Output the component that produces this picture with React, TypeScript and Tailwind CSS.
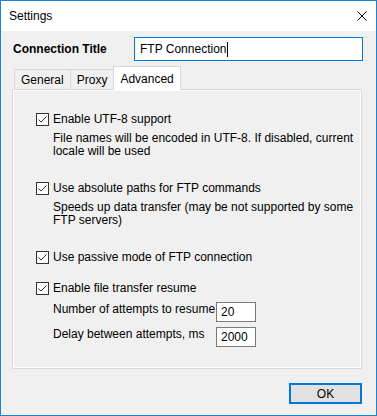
import React from 'react';

const FONT = { fontFamily: '"Liberation Sans", Arial, sans-serif' };

function Check() {
  return (
    <span className="w-[13px] h-[13px] border border-[#333333] bg-white flex items-center justify-center shrink-0">
      <svg width="11" height="11" viewBox="0 0 11 11">
        <polyline points="1.5,5.5 4,8 9.5,2.5" fill="none" stroke="#333333" strokeWidth="1" />
      </svg>
    </span>
  );
}

function CheckRow({ label, className = '' }: { label: string; className?: string }) {
  return (
    <div className={`flex items-center gap-[4px] h-[14px] ${className}`}>
      <Check />
      <span>{label}</span>
    </div>
  );
}

function Tab({ label, active }: { label: string; active?: boolean }) {
  if (active) {
    return (
      <div className="relative z-10 -mb-px h-[24px] px-[6px] bg-white border border-b-0 border-[#d9d9d9] flex items-center -ml-px">
        {label}
      </div>
    );
  }
  return (
    <div className="h-[20px] px-[6px] bg-[#f0f0f0] border border-b-0 border-[#d9d9d9] flex items-center -ml-px first:ml-0">
      {label}
    </div>
  );
}

function NumBox({ value }: { value: string }) {
  return (
    <div className="w-[40px] h-[20px] border border-[#7a7a7a] bg-white flex items-center pl-[4px]">{value}</div>
  );
}

export default function App() {
  return (
    <div
      className="w-[377px] h-[416px] border border-[#1883d7] bg-[#f0f0f0] flex flex-col text-[12px] text-black overflow-hidden"
      style={FONT}
    >
      <div className="h-[30px] bg-white flex items-center justify-between pl-[8px] pr-[9px] shrink-0">
        <span>Settings</span>
        <svg width="10" height="10" viewBox="0 0 10 10">
          <path d="M0.5 0.5 L9.5 9.5 M9.5 0.5 L0.5 9.5" stroke="#000" strokeWidth="1" />
        </svg>
      </div>

      <div className="px-[11px] flex flex-col">
        <div className="flex items-center mt-[6px] h-[24px]">
          <span className="font-bold w-[122px] pl-[1px] text-[12px]">Connection Title</span>
          <div className="w-[229px] h-[24px] border border-[#0078d7] bg-white flex items-center pl-[5px]">
            <span>FTP Connection</span>
            <span className="w-px h-[15px] bg-black" />
          </div>
        </div>

        <div className="flex items-end mt-[5px] pl-[2px]">
          <Tab label="General" />
          <Tab label="Proxy" />
          <Tab label="Advanced" active />
        </div>

        <div className="w-[350px] h-[280px] border border-[#d9d9d9]">
          <div className="w-full h-full border border-white pl-[22px] flex flex-col">
            <CheckRow label="Enable UTF-8 support" className="mt-[21px]" />
            <div className="pl-[17px] mt-[6px] leading-[13px]">
              File names will be encoded in UTF-8. If disabled, current
              <br />
              locale will be used
            </div>

            <CheckRow label="Use absolute paths for FTP commands" className="mt-[23px]" />
            <div className="pl-[17px] mt-[6px] leading-[13px]">
              Speeds up data transfer (may be not supported by some
              <br />
              FTP servers)
            </div>

            <CheckRow label="Use passive mode of FTP connection" className="mt-[23px]" />
            <CheckRow label="Enable file transfer resume" className="mt-[17px]" />

            <div className="grid grid-cols-[163px_40px] gap-y-[5px] pl-[17px] mt-[7px]">
              <span className="leading-[14px]">Number of attempts to resume</span>
              <NumBox value="20" />
              <span className="leading-[14px]">Delay between attempts, ms</span>
              <NumBox value="2000" />
            </div>
          </div>
        </div>

        <div className="flex justify-end mt-[14px] pr-[3px]">
          <button className="w-[73px] h-[21px] border-2 border-[#0078d7] bg-[#e1e1e1] flex items-center justify-center">
            OK
          </button>
        </div>
      </div>
    </div>
  );
}
